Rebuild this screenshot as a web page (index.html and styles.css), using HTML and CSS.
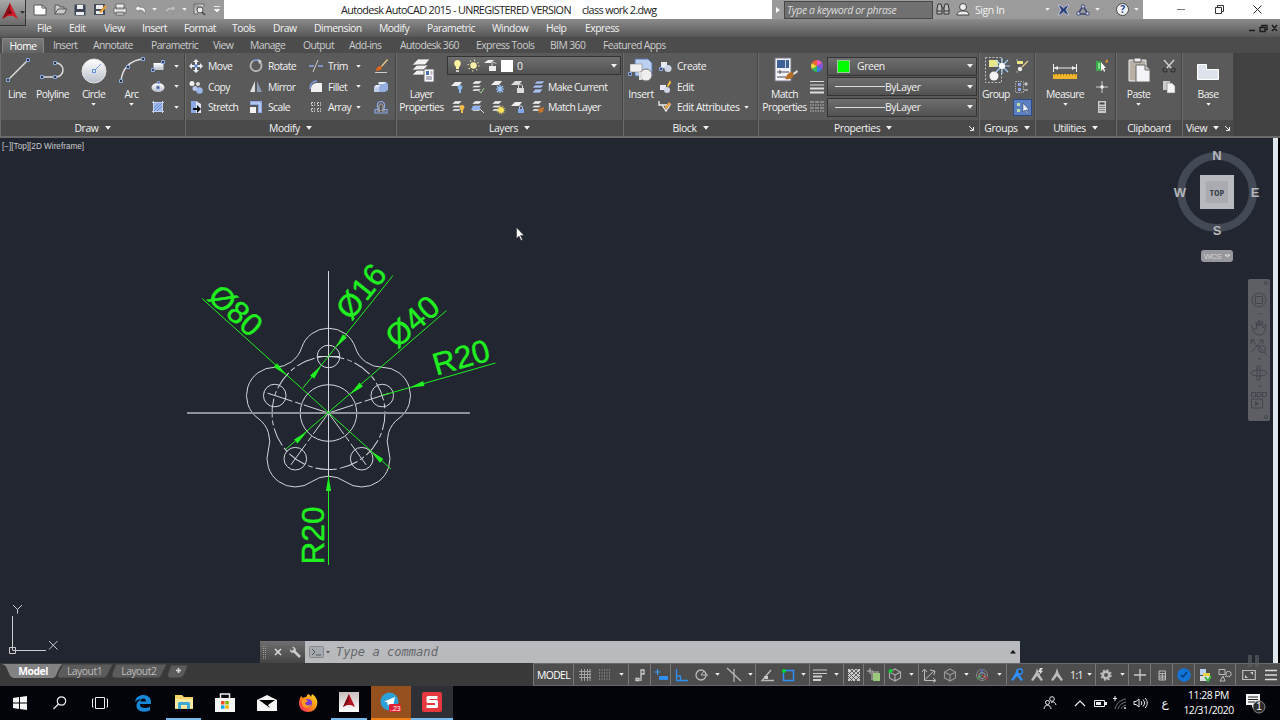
FILE: index.html
```
<!DOCTYPE html>
<html lang="en">
<head>
    <meta charset="UTF-8">
    <title>Autodesk AutoCAD 2015 - class work 2.dwg</title>
    <link rel="stylesheet" href="styles.css">
</head>
<body>
<svg class="defs">
    <defs>
        <linearGradient id="metal" x1="0" y1="0" x2="0" y2="1"><stop offset="0" stop-color="#fff"/><stop offset="1" stop-color="#b9c0cc"/></linearGradient>
        <linearGradient id="rose" x1="0" y1="0" x2="0" y2="1"><stop offset="0" stop-color="#c9bcbc"/><stop offset="1" stop-color="#fff"/></linearGradient>
        <linearGradient id="fox" x1="1" y1="0" x2="0" y2="1"><stop offset="0" stop-color="#ffe226"/><stop offset=".5" stop-color="#ff8a16"/><stop offset="1" stop-color="#f5156c"/></linearGradient>
    </defs>
    <symbol id="down" viewBox="0 0 6 4"><path d="M0 0h6L3 3.800z" fill="#f2f2f2"/></symbol>
    <symbol id="layers" viewBox="0 0 12 12"><path d="M4 1h7L8 4H1zM3 5.500h7l-2 2H1zM3 9h7l-2 2H1z" fill="#eee" stroke="#555" stroke-width=".4"/></symbol>
    <symbol id="person" viewBox="0 0 14 14"><path d="M7 0l1.500 5L13 12l-2 1-4-5-4 5-2-1 4.500-7z"/></symbol>
    <symbol id="cube" viewBox="0 0 14 14"><path d="M7 1l5.500 3v6L7 13 1.500 10V4zM1.500 4L7 7l5.500-3M7 7v6" fill="none" stroke="#aaa" stroke-width="1.200"/></symbol>
</svg>

<header class="titlebar">
    <div class="app-button">
        <svg width="26" height="26" viewBox="0 0 26 26"><path d="M10 3l8 16-5-3H8l-5 3z" fill="#d01f2c"/><path d="M10 3L2 19l6-4 2-6z" fill="#8e0e18"/><path d="M10 9l2 5H8z" fill="#6b0a12"/><path d="M20 11h5l-2.500 3z" fill="#333"/></svg>
    </div>
    <div class="quick">
        <svg width="14" height="12" viewBox="0 0 14 12"><path d="M1 1h8l4 3v7H1z" fill="#fff" stroke="#555"/><path d="M9 1v3h4" fill="none" stroke="#555"/></svg>
        <svg width="14" height="12" viewBox="0 0 14 12"><path d="M1 10V1h4l1 2h4v2M1 10l3-5h9l-3 5z" fill="#ccc" stroke="#555"/></svg>
        <svg width="12" height="12" viewBox="0 0 12 12"><path d="M.5.500h11v11H.5z" fill="#3f4656"/><path d="M3 1h6v4H3zM2 8h8v3H2z" fill="#eee"/></svg>
        <svg width="14" height="14" viewBox="0 0 14 14"><path d="M1 1h11v11H1z" fill="#444b58"/><path d="M3 2h7v4H3zM3 8h7v3H3z" fill="#eee"/><path d="M6 9l6-7 2 2-6 6z" fill="#e49b3d"/></svg>
        <svg width="14" height="12" viewBox="0 0 14 12"><path d="M3 0h8v5H3zM1 4h12v5H1zM3 8h8v3H3z" fill="#eee" stroke="#555" stroke-width=".8"/></svg>
        <svg width="13" height="11" viewBox="0 0 13 11"><path d="M5 1L1 4.500 5 8V6c4 0 5 1 5 4 3-4 1-7-5-7z" fill="#f2f2f2" stroke="#666" stroke-width=".6"/></svg>
        <svg width="5" height="3"><use href="#down"/></svg>
        <svg width="13" height="11" viewBox="0 0 13 11"><path d="M8 1l4 3.500L8 8V6C4 6 3 7 3 10 0 6 2 3 8 3z" fill="#bbb" stroke="#888" stroke-width=".6"/></svg>
        <svg width="5" height="3"><use href="#down"/></svg>
        <svg width="13" height="13" viewBox="0 0 13 13"><path d="M1 1h10v3M1 1v10h4" fill="#ccc" stroke="#666"/><circle cx="7" cy="7" r="3" fill="#eee" stroke="#555"/><path d="M9 9l3 3" stroke="#444" stroke-width="1.500"/></svg>
        <svg width="8" height="8" viewBox="0 0 8 8"><path d="M1 .500h6M1.500 3.500h5L4 6z" fill="#fff" stroke="#fff" stroke-width=".8"/></svg>
    </div>
    <div class="title"><span>Autodesk AutoCAD 2015 - UNREGISTERED VERSION</span><span>class work 2.dwg</span></div>
    <div class="infocenter">
        <svg width="4" height="6"><path d="M0 0l4 3-4 3z" fill="#fff"/></svg>
        <span class="search">Type a keyword or phrase</span>
        <svg width="14" height="13" viewBox="0 0 14 13"><path d="M2 1h3l1 4v6H1V6zM9 1h3l1 5v5H8V5zM6 5h2" fill="#bbb" stroke="#333"/><path d="M1 8h5M8 8h5" stroke="#333"/></svg>
        <svg width="14" height="13" viewBox="0 0 14 13"><circle cx="7" cy="4" r="3.500" fill="#eee" stroke="#444"/><path d="M1 12c0-3 3-4 6-4s6 1 6 4z" fill="#eee" stroke="#444"/></svg>
        <span class="signin">Sign In</span>
        <svg width="5" height="3"><use href="#down"/></svg>
        <svg width="13" height="12" viewBox="0 0 13 12"><path d="M1 1c3 0 4 2 5.500 3C8 3 9 1 12 1L9 6l3 5c-3 0-4-2-5.500-3C5 9 4 11 1 11l3-5z" fill="#2b3f7c" stroke="#d5daea" stroke-width=".7"/></svg>
        <svg width="14" height="12" viewBox="0 0 14 12"><path d="M7 2l5 8H2z" fill="none" stroke="#3a4676" stroke-width="1.500"/><circle cx="7" cy="2.500" r="1.700" fill="#cdd3e5" stroke="#3a4676"/><circle cx="2.500" cy="9.500" r="1.700" fill="#cdd3e5" stroke="#3a4676"/><circle cx="11.500" cy="9.500" r="1.700" fill="#cdd3e5" stroke="#3a4676"/></svg>
        <svg width="5" height="3"><use href="#down"/></svg>
        <span class="help">?</span>
        <svg width="5" height="3"><use href="#down"/></svg>
    </div>
    <div class="window-buttons">
        <svg width="9" height="9"><path d="M0 4.500h8" stroke="#777"/></svg>
        <svg width="9" height="9"><path d="M.5 2.500h6v6h-6zM2.500 2V.500h6v6H7" fill="none" stroke="#333"/></svg>
        <svg width="9" height="9"><path d="M.5.500l8 8M8.500.500l-8 8" stroke="#222"/></svg>
    </div>
</header>

<nav class="menubar">
    <span>File</span><span>Edit</span><span>View</span><span>Insert</span><span>Format</span><span>Tools</span><span>Draw</span><span>Dimension</span><span>Modify</span><span>Parametric</span><span>Window</span><span>Help</span><span>Express</span>
    <svg width="30" height="8" viewBox="0 0 30 8"><path d="M1 6.500h6M12 3.500h5v4h-5zM14 3V1.500h5v4h-2M24 1l5 6M29 1l-5 6" fill="none" stroke="#1c1c1c" stroke-width="1.400"/></svg>
</nav>

<nav class="tabs">
    <span class="active">Home</span><span>Insert</span><span>Annotate</span><span>Parametric</span><span>View</span><span>Manage</span><span>Output</span><span>Add-ins</span><span>Autodesk 360</span><span>Express Tools</span><span>BIM 360</span><span>Featured Apps</span>
    <svg width="21" height="7" viewBox="0 0 21 7"><rect width="12" height="7" rx="2" fill="#eee"/><path d="M4 4.500h4L6 2z" fill="#333"/><path d="M16 2.500h5l-2.500 3z" fill="#eee"/></svg>
</nav>

<section class="ribbon">
    <div class="panel">
        <div class="panel-body draw">
            <div class="big"><svg width="28" height="28" viewBox="0 0 28 28"><path d="M5 24L25 4" stroke="#ddd" stroke-width="1.500"/><path d="M3.500 22.500h3v3h-3zM23.500 2.500h3v3h-3z" fill="#333" stroke="#8aa9e6"/></svg><span>Line</span></div>
            <div class="big"><svg width="28" height="28" viewBox="0 0 28 28"><path d="M3 21h14a7 7 0 0 0 0-14h-1" fill="none" stroke="#ddd" stroke-width="1.500"/><path d="M1.500 19.500h3v3h-3zM14.500 19.500h3v3h-3zM14.500 5.500h3v3h-3z" fill="#333" stroke="#8aa9e6"/></svg><span>Polyline</span></div>
            <div class="big"><svg width="28" height="28" viewBox="0 0 28 28"><circle cx="14" cy="15" r="12" fill="url(#metal)" stroke="#ddd"/><path d="M14 15l7-7" stroke="#7d9fe0"/><path d="M12.500 13.500h3v3h-3z" fill="#dfe6f4" stroke="#5f8add"/></svg><span>Circle</span><svg class="arrow"><use href="#down"/></svg></div>
            <div class="big"><svg width="28" height="28" viewBox="0 0 28 28"><path d="M3 25C4 13 12 4 25 3" fill="none" stroke="#ddd" stroke-width="1.500"/><path d="M1.500 23.500h3v3h-3zM8.500 9.500h3v3h-3zM23.500 1.500h3v3h-3z" fill="#333" stroke="#8aa9e6"/></svg><span>Arc</span><svg class="arrow"><use href="#down"/></svg></div>
            <div class="stack">
                <div><svg class="ic" viewBox="0 0 14 14"><path d="M2.500 4h10v7h-10z" fill="url(#metal)"/><path d="M.5 9.500h3v3h-3zM10.500 1.500h3v3h-3z" fill="#445" stroke="#8aa9e6"/></svg><svg class="arrow"><use href="#down"/></svg></div>
                <div><svg class="ic" viewBox="0 0 14 14"><ellipse cx="7" cy="7.500" rx="6.500" ry="4.500" fill="url(#metal)"/><path d="M5.500 6h3v3h-3zM6.500 1.500h2v2h-2z" fill="#556" stroke="#8aa9e6"/></svg><svg class="arrow"><use href="#down"/></svg></div>
                <div><svg class="ic" viewBox="0 0 14 14"><path d="M3 3h8v8H3z" fill="#9db6ea"/><path d="M1 2.500h12M1 11.500h12M2.500 1v12M11.500 1v12" stroke="#c5d2ef"/><path d="M3 8l5-5M3 11l8-8M6 11l5-5" stroke="#6d8fd4"/></svg><svg class="arrow"><use href="#down"/></svg></div>
            </div>
        </div>
        <div class="panel-title">Draw<svg><use href="#down"/></svg></div>
    </div>

    <div class="panel">
        <div class="panel-body modify">
            <div class="stack">
                <div><svg class="ic" viewBox="0 0 14 14"><path d="M7 0l3 3H8v3h3V4l3 3-3 3V8H8v3h2l-3 3-3-3h2V8H3v2L0 7l3-3v2h3V3H4z" fill="#e8ecf5"/><path d="M5.500 5.500h3v3h-3z" fill="#557dcc"/></svg><span>Move</span></div>
                <div><svg class="ic" viewBox="0 0 14 14"><circle cx="3" cy="3.500" r="2.500" fill="#eee"/><circle cx="9" cy="4" r="2" fill="#ddd"/><circle cx="6" cy="8.500" r="2.500" fill="#b9c8ea"/><circle cx="10.500" cy="10.500" r="3.200" fill="#9cb6ea"/></svg><span>Copy</span></div>
                <div><svg class="ic" viewBox="0 0 14 14"><path d="M2 1h5l5 3v9H2z" fill="#dfe6f3"/><path d="M2 1h5v12H2z" fill="#8aa9e6"/><path d="M4 8h4V5l4 4-4 4v-3H4z" fill="#111"/></svg><span>Stretch</span></div>
            </div>
            <div class="stack">
                <div><svg class="ic" viewBox="0 0 14 14"><path d="M10 2A5.500 5.500 0 1 1 4 2" fill="none" stroke="#bbb" stroke-width="1.700"/><path d="M4 2a5.500 5.500 0 0 1 6 0" fill="none" stroke="#7fa2e4" stroke-width="1.500"/><path d="M9 0l4 2-3 3z" fill="#ccc"/></svg><span>Rotate</span></div>
                <div><svg class="ic" viewBox="0 0 14 14"><path d="M6 1v11H1z" fill="#ddd"/><path d="M8 1v11h5z" fill="#8a99b5"/></svg><span>Mirror</span></div>
                <div><svg class="ic" viewBox="0 0 14 14"><path d="M1 1h12v12H9V5H1z" fill="#8aa9e6"/><path d="M1 7h6v6H1z" fill="#f2f2f2"/><path d="M2 3h9v9" stroke="#dce5f8" fill="none"/></svg><span>Scale</span></div>
            </div>
            <div class="stack">
                <div><svg class="ic" viewBox="0 0 14 14"><path d="M0 7h5M9 7h5" stroke="#8aa9e6" stroke-width="1.500"/><path d="M4 13L9 1" stroke="#ccc"/></svg><span>Trim</span></div>
                <div><svg class="ic" viewBox="0 0 14 14"><path d="M2 12V9c0-4 3-6 6-6h5v9z" fill="#f0f0f0"/><path d="M1 9c0-5 3-8 7-8" fill="none" stroke="#7fa2e4" stroke-width="1.500"/></svg><span>Fillet</span></div>
                <div><svg class="ic" viewBox="0 0 14 14"><path d="M2.500 2.500h3v3h-3zM8.500 2.500h3v3h-3zM2.500 8.500h3v3h-3zM8.500 8.500h3v3h-3z" fill="none" stroke="#ddd" stroke-dasharray="1.500 1"/></svg><span>Array</span></div>
            </div>
            <div class="stack">
                <div><svg class="arrow"><use href="#down"/></svg></div>
                <div><svg class="arrow"><use href="#down"/></svg></div>
                <div><svg class="arrow"><use href="#down"/></svg></div>
            </div>
            <div class="stack">
                <div><svg class="ic" viewBox="0 0 14 14"><path d="M7 7l6-7 1 1-6 7z" fill="#eac68b"/><path d="M2 12c0-3 2-5 5-5l1 2c-1 2-3 3-6 3z" fill="#d9681e"/><path d="M1 13.500h12" stroke="#ccc"/></svg></div>
                <div><svg class="ic" viewBox="0 0 14 14"><path d="M5 2h7l2 2v6l-3 2H5z" fill="#93aedf"/><path d="M5 2h7l-2 2H4zM0 7l2-2h4l-1 2z" fill="#e7edf9"/><path d="M0 7h5v5H0z" fill="#c1cfeb"/></svg></div>
                <div><svg class="ic" viewBox="0 0 14 14"><path d="M1 13V9.500h3.500C2 6 3.500 1.500 7 1.500s5 4.500 2.500 8H13V13z" fill="none" stroke="#8aa9e6" stroke-width="1.200"/><path d="M3 11h3C4 7 5 4 7 4s3 3 1 7h3" fill="none" stroke="#bbb"/></svg></div>
            </div>
        </div>
        <div class="panel-title">Modify<svg><use href="#down"/></svg></div>
    </div>

    <div class="panel">
        <div class="panel-body layers">
            <div class="big"><svg width="28" height="28" viewBox="0 0 28 28"><path d="M10 3h12l-5 6H4zM9 9h11l-4 5H4zM9 14h11l-4 5H4z" fill="#f1f1f1" stroke="#555" stroke-width=".7"/><path d="M16 13h10v13H16z" fill="#fff" stroke="#667"/><path d="M18 15h3v4h-3z" fill="#4c70b8"/><path d="M22.500 16h2M22.500 18h2M18 21h6M18 23h6" stroke="#668"/></svg><span>Layer<br>Properties</span></div>
            <div>
                <div class="combo">
                    <svg width="11" height="14" viewBox="0 0 11 14"><path d="M5.500 1C2 1 1 5 4 8v2h3V8c3-2 2-7-1.500-7z" fill="#fdf3a3"/><path d="M4 11h3v2H4z" fill="#ccc"/></svg>
                    <svg width="13" height="13" viewBox="0 0 13 13"><circle cx="6.500" cy="6.500" r="3.200" fill="#fbf1a6"/><circle cx="6.500" cy="6.500" r="5.300" fill="none" stroke="#f0e9b0" stroke-width="1.500" stroke-dasharray="1 3.160"/></svg>
                    <svg width="13" height="13" viewBox="0 0 13 13"><path d="M4 1h6L7 4H0zM5 7h7v5H5z" fill="#eee"/><path d="M8 7V5c0-2 4-2 4 0" fill="none" stroke="#ddd"/></svg>
                    <i class="swatch white"></i><span>0</span><svg class="arrow"><use href="#down"/></svg>
                </div>
                <div class="icon-row">
                    <svg class="ic" viewBox="0 0 14 14"><path d="M4 2h7L8 6H0z" fill="#eee"/><path d="M9 5c-3 0-3 3-1 5v3h2v-3c2-2 2-5-1-5z" fill="#86b7f0"/></svg>
                    <svg class="ic" viewBox="0 0 14 14"><use href="#layers" width="12" height="12"/><path d="M8 11l2 2 3-5" fill="none" stroke="#9bd08c"/></svg>
                    <svg class="ic" viewBox="0 0 14 14"><path d="M4 1h7L8 5H0z" fill="#eee"/><path d="M9 5v8M5 9h8M6 6l6 6M12 6l-6 6" stroke="#9cc6ff" stroke-width="1.200"/></svg>
                    <svg class="ic" viewBox="0 0 14 14"><path d="M4 1h7L8 5H0zM6 8h7v5H6z" fill="#ddd"/><path d="M7.500 8V6c0-2 4-2 4 0v2" fill="none" stroke="#ddd"/></svg>
                    <svg class="ic" viewBox="0 0 14 14"><path d="M6 1h8l-3 3H3zM4 5h9l-3 3H1zM4 9h8l-3 4H1z" fill="#a9c0ec" stroke="#445" stroke-width=".6"/></svg>
                    <span>Make Current</span>
                </div>
                <div class="icon-row">
                    <svg class="ic" viewBox="0 0 14 14"><use href="#layers" width="12" height="12"/><path d="M11 5c-3 0-3 3-1 5v3h2v-3c2-2 2-5-1-5z" fill="#f5bd4a"/></svg>
                    <svg class="ic" viewBox="0 0 14 14"><use href="#layers" width="12" height="12"/><path d="M2 6h8l-2 4H0z" fill="#8fb0ea"/><path d="M9 9l4 4" stroke="#ddd"/></svg>
                    <svg class="ic" viewBox="0 0 14 14"><use href="#layers" width="12" height="12"/><circle cx="10" cy="10" r="3" fill="#ffe35b"/><circle cx="10" cy="10" r="4" fill="none" stroke="#ffe97e" stroke-dasharray="1 1.500"/></svg>
                    <svg class="ic" viewBox="0 0 14 14"><path d="M4 2h7L8 6H0z" fill="#eee"/><path d="M7 9h6v4H7z" fill="#7fa7ea"/><path d="M8.500 9V7c0-1.500 3-1.500 3 0v2" fill="none" stroke="#b5caee"/></svg>
                    <svg class="ic" viewBox="0 0 14 14"><use href="#layers" width="12" height="12"/><path d="M7 9l6-2-1 5-4 1z" fill="#c7752c"/></svg>
                    <span>Match Layer</span>
                </div>
            </div>
        </div>
        <div class="panel-title">Layers<svg><use href="#down"/></svg></div>
    </div>

    <div class="panel">
        <div class="panel-body block">
            <div class="big"><svg width="28" height="28" viewBox="0 0 28 28"><path d="M8 3h13l4 4v13H8z" fill="#bcd0f2" stroke="#5577ad"/><path d="M3 8h12v8H3z" fill="#f1f1f1" stroke="#777" stroke-width=".5"/><circle cx="19" cy="19" r="6" fill="#eee" stroke="#777"/><path d="M1.500 16.500h3v3h-3z" fill="#445" stroke="#8aa9e6"/><path d="M12 16h3v8h-3z" fill="#ddd"/></svg><span>Insert</span></div>
            <div class="stack">
                <div><svg class="ic" viewBox="0 0 14 14"><path d="M3 3h6v6H3z" fill="#e5eaf5"/><circle cx="10" cy="9.500" r="3.500" fill="#cdd5e6"/><path d="M1.500 8.500h3v3h-3z" fill="#456" stroke="#8aa9e6"/></svg><span>Create</span></div>
                <div><svg class="ic" viewBox="0 0 14 14"><path d="M2 5h6v5H2z" fill="#e5eaf5"/><circle cx="9" cy="10" r="3" fill="#cdd5e6"/><path d="M9 6l3-6 1 3-3 4z" fill="#ffc13b"/></svg><span>Edit</span></div>
                <div><svg class="ic" viewBox="0 0 14 14"><path d="M1 1v4h3M4 5h8l-4 6z" fill="none" stroke="#eee" stroke-width="1.300"/><path d="M6 8l5-6 2 2-5 5z" fill="#eaa04f"/></svg><span>Edit Attributes</span><svg class="arrow"><use href="#down"/></svg></div>
            </div>
        </div>
        <div class="panel-title">Block<svg><use href="#down"/></svg></div>
    </div>

    <div class="panel">
        <div class="panel-body properties">
            <div class="big"><svg width="28" height="28" viewBox="0 0 28 28"><path d="M4 2h16v23H4z" fill="#f3f4f8" stroke="#778"/><path d="M6 4h12v8H6z" fill="#3e6198"/><path d="M14.500 4v8" stroke="#c9d3e6"/><path d="M6 16h12M9 14v4M6 21h9" stroke="#445"/><path d="M14 23c2-5 4-7 7-7l2 3c-2 4-5 5-9 4z" fill="#b66e2b"/><path d="M22 17l4-3 1 2-4 3z" fill="#ddd"/></svg><span>Match<br>Properties</span></div>
            <div class="stack">
                <div><svg class="ic" viewBox="0 0 14 14"><path d="M7 7V1a6 6 0 0 1 5.200 3z" fill="#e85ac0"/><path d="M7 7l5.200-3a6 6 0 0 1 0 6z" fill="#8854d8"/><path d="M7 7l5.200 3A6 6 0 0 1 7 13z" fill="#3f77e0"/><path d="M7 7v6a6 6 0 0 1-5.200-3z" fill="#35b95b"/><path d="M7 7l-5.200 3a6 6 0 0 1 0-6z" fill="#f4db3d"/><path d="M7 7L1.800 4A6 6 0 0 1 7 1z" fill="#ee6236"/></svg></div>
                <div><svg class="ic" viewBox="0 0 14 14"><path d="M0 1.500h14M0 5h14" stroke="#ddd" stroke-width="1.200"/><path d="M0 8.500h14M0 12.500h14" stroke="#ddd" stroke-width="2.200"/></svg></div>
                <div><svg class="ic" viewBox="0 0 14 14"><path d="M0 2h14M0 8h14" stroke="#bbb" stroke-dasharray="4 1"/><path d="M0 5h14M0 11h14" stroke="#bbb" stroke-dasharray="1.500 1"/></svg></div>
            </div>
            <div class="combos">
                <div class="combo"><i class="swatch green"></i><span>Green</span><svg class="arrow"><use href="#down"/></svg></div>
                <div class="combo"><i class="rule"></i><span>ByLayer</span><svg class="arrow"><use href="#down"/></svg></div>
                <div class="combo"><i class="rule"></i><span>ByLayer</span><svg class="arrow"><use href="#down"/></svg></div>
            </div>
        </div>
        <div class="panel-title wide">Properties<svg><use href="#down"/></svg><svg class="launch" viewBox="0 0 5 5"><path d="M0 0l4 4M4.500 1v3.500H1" fill="none" stroke="#eee"/></svg></div>
    </div>

    <div class="panel">
        <div class="panel-body groups">
            <div class="big"><svg width="28" height="28" viewBox="0 0 28 28"><path d="M3.500 1.500h16v25h-16z" fill="none" stroke="#bbb" stroke-dasharray="2 1.500"/><path d="M7 4h9v7H7z" fill="#e9e78a"/><circle cx="12" cy="20" r="4.500" fill="#f3f3f3"/><path d="M20 2v16M12 10h16M14 4l12 12M26 4L14 16" stroke="#a8d1ff" stroke-width="1.200"/><circle cx="20" cy="10" r="3" fill="#fff"/></svg><span>Group</span></div>
            <div class="stack">
                <div><svg class="ic" viewBox="0 0 14 14"><path d="M2 2h6v3H2z" fill="#e9e78a"/><circle cx="5" cy="10" r="2.200" fill="#eee"/><path d="M7 8l6-6" stroke="#e0c68a" stroke-width="1.500"/><path d="M1 1h2M1 13h2" stroke="#aaa"/></svg></div>
                <div><svg class="ic" viewBox="0 0 14 14"><path d="M.5 1.500h8v11h-8z" fill="none" stroke="#aaa" stroke-dasharray="1.500 1"/><path d="M3 3h3v3H3zM3 8h3v3H3z" fill="#8aa9e6"/><path d="M9 4h4M11 2v4M9 10h4" stroke="#ddd"/></svg></div>
                <div class="pressed"><svg class="ic" viewBox="0 0 14 14"><path d="M1 2h3v3H1zM1 8h3v3H1z" fill="#b7e0a2"/><path d="M7 2v9l2-2 2 4 1-1-2-3h3z" fill="#eef" stroke="#345" stroke-width=".5"/></svg></div>
            </div>
        </div>
        <div class="panel-title">Groups<svg><use href="#down"/></svg></div>
    </div>

    <div class="panel">
        <div class="panel-body utilities">
            <div class="big"><svg width="28" height="28" viewBox="0 0 28 28"><path d="M2.500 8v8M25.500 8v8M3 12h22" stroke="#eee"/><path d="M3 12l4-2v4zM25 12l-4-2v4z" fill="#eee"/><path d="M2 18h24v5H2z" fill="#f0b52b"/><path d="M3 18.500h22" stroke="#8c6a1b" stroke-width="1.500" stroke-dasharray="1 2"/></svg><span>Measure</span><svg class="arrow"><use href="#down"/></svg></div>
            <div class="stack">
                <div><svg class="ic" viewBox="0 0 14 14"><path d="M1 2h5v10H1z" fill="#39a84d"/><path d="M3 4h2v6H3z" fill="#7fe08e"/><path d="M6 3v9l2-2 1 3 1-1-1-3h2z" fill="#fff"/><path d="M10 4l2-4 1 3z" fill="#ff9d2c"/></svg></div>
                <div><svg class="ic" viewBox="0 0 14 14"><path d="M7 1v12M1 7h12" stroke="#ccc"/><circle cx="7" cy="7" r="1.800" fill="#eee"/></svg></div>
                <div><svg class="ic" viewBox="0 0 14 14"><path d="M3 1h8v12H3z" fill="#ccc"/><path d="M4.500 2.500h5v2h-5zM4.500 6h1v1h-1zM6.500 6h1v1h-1zM8.500 6h1v1h-1zM4.500 8h1v1h-1zM6.500 8h1v1h-1zM8.500 8h1v1h-1zM4.500 10h1v1h-1zM6.500 10h1v1h-1zM8.500 10h1v1h-1z" fill="#444"/></svg></div>
            </div>
        </div>
        <div class="panel-title">Utilities<svg><use href="#down"/></svg></div>
    </div>

    <div class="panel">
        <div class="panel-body clipboard">
            <div class="big"><svg width="28" height="28" viewBox="0 0 28 28"><path d="M4 4h17v21H4z" fill="#b9b1a6" stroke="#eee"/><path d="M9 2h7v4H9z" fill="#eee" stroke="#555"/><path d="M11 9h9l5 5v12H11z" fill="#f3f4f8" stroke="#666"/><path d="M20 9v5h5" fill="#ccc" stroke="#666"/></svg><span>Paste</span><svg class="arrow"><use href="#down"/></svg></div>
            <div class="stack">
                <div><svg class="ic" viewBox="0 0 14 14"><path d="M2 1l8 9M12 1L4 10" stroke="#ccc" stroke-width="1.500"/><circle cx="3" cy="11" r="2" fill="none" stroke="#333" stroke-width="1.200"/><circle cx="11" cy="11" r="2" fill="none" stroke="#333" stroke-width="1.200"/></svg></div>
                <div><svg class="ic" viewBox="0 0 14 14"><path d="M1 1h7v9H1z" fill="#ccc"/><path d="M5 3h5l3 3v7H5z" fill="#f5f5f5" stroke="#777" stroke-width=".6"/></svg></div>
            </div>
        </div>
        <div class="panel-title">Clipboard</div>
    </div>

    <div class="panel">
        <div class="panel-body view">
            <div class="big"><svg width="28" height="28" viewBox="0 0 28 28"><path d="M3.500 8.500h9v5h12v10h-21z" fill="#dfe3ec" stroke="#fff"/></svg><span>Base</span><svg class="arrow"><use href="#down"/></svg></div>
        </div>
        <div class="panel-title">View<svg><use href="#down"/></svg><svg class="launch" viewBox="0 0 5 5"><path d="M0 0l4 4M4.500 1v3.500H1" fill="none" stroke="#eee"/></svg></div>
    </div>
</section>

<main class="canvas">
    <p class="viewport-label">[−][Top][2D Wireframe]</p>

    <!-- model space: flange with its dimensions, one unit per pixel -->
    <svg class="model" viewBox="0 138 1273 525">
        <g class="geometry" transform="translate(328.500 413)">
            <path d="M-26.890-65.260A28.280 28.280 0 0 1 26.890-65.260A28.280 28.280 0 0 0 53.760-45.740A28.280 28.280 0 0 1 70.370 5.400A28.280 28.280 0 0 0 60.110 36.990A28.280 28.280 0 0 1 16.610 68.600A28.280 28.280 0 0 0-16.610 68.600A28.280 28.280 0 0 1-60.110 36.990A28.280 28.280 0 0 0-70.370 5.400A28.280 28.280 0 0 1-53.760-45.740A28.280 28.280 0 0 0-26.890-65.260z"/>
            <circle r="28.300"/>
            <circle r="56.500" stroke-dasharray="19 3 5 3" transform="rotate(84)"/>
            <circle cy="-56.500" r="11.300"/>
            <circle cx="53.740" cy="-17.460" r="11.300"/>
            <circle cx="-53.740" cy="-17.460" r="11.300"/>
            <circle cx="33.200" cy="45.700" r="11.300"/>
            <circle cx="-33.200" cy="45.700" r="11.300"/>
            <path d="M0-142V63M-11-56.500H11"/>
            <path stroke-dasharray="26 3 6 3" d="M0 0L64.500-21M0 0L-64.500-21M0 0L39.800 54.800M0 0L-39.800 54.800"/>
            <path class="axis" d="M-141.500 0H141.500"/>
        </g>
        <g class="dims">
            <path d="M202 298.500L391 469M393 275.500L303 388M446.500 310.500L286 449M495.500 363L382 395.500M328.500 565V476"/>
            <path class="tip" transform="translate(286.500 375.200) rotate(42)" d="M0 0l-15-2.600v5.200z"/>
            <path class="tip" transform="translate(370.500 450.800) rotate(42)" d="M0 0l15-2.600v5.200z"/>
            <path class="tip" transform="translate(335.500 347.700) rotate(-51.500)" d="M0 0l15-2.600v5.200z"/>
            <path class="tip" transform="translate(321.500 365.300) rotate(-51.500)" d="M0 0l-15-2.600v5.200z"/>
            <path class="tip" transform="translate(349.900 394.400) rotate(-41)" d="M0 0l15-2.600v5.200z"/>
            <path class="tip" transform="translate(307.100 431.600) rotate(-41)" d="M0 0l-15-2.600v5.200z"/>
            <path class="tip" transform="translate(409.400 387.700) rotate(-16)" d="M0 0l15-2.600v5.200z"/>
            <path class="tip" transform="translate(328.500 476)" d="M0 0l-2.600 15h5.200z"/>
            <text transform="translate(236 310) rotate(42)" y="11.300">Ø80</text>
            <text transform="translate(360.800 291) rotate(-51.500)" y="11.300">Ø16</text>
            <text transform="translate(412 321) rotate(-41)" y="11.300">Ø40</text>
            <text transform="translate(461 357) rotate(-16)" y="11.300">R20</text>
            <text transform="translate(312.500 535.500) rotate(-90)" y="11.300">R20</text>
        </g>
        <path class="ucs" d="M12.500 616v34M12.500 650.500H46M9.500 647.500h6v6h-6zM13 605l4.500 4.500L22 605M17.500 609.500v4M49 641l8.500 8.500M57.500 641L49 649.500"/>
        <path class="pointer" d="M516.500 227.500v11l2.500-2.500 2 4.500 1.500-.700-2-4.300h3.500z"/>
    </svg>

    <div class="viewcube">
        <svg width="90" height="90" viewBox="0 0 90 90">
            <circle cx="45" cy="45" r="36" fill="none" stroke="#434a55" stroke-width="8"/>
            <path d="M28 28h34v34H28z" fill="#b9babd"/><path d="M34 34h22v22H34z" fill="#a9abb0"/>
            <g class="compass"><text x="45" y="12.500">N</text><text x="45" y="87.500">S</text><text x="8" y="50">W</text><text x="83" y="50">E</text></g>
            <text class="face" x="45" y="48.500">TOP</text>
        </svg>
    </div>
    <div class="wcs">WCS <svg width="6" height="4"><path d="M0 1h5L2.500 3z" fill="none" stroke="#ddd"/></svg></div>
    <svg class="navbar" viewBox="0 0 22 142">
        <rect width="22" height="142" rx="2" fill="#5d5f64"/>
        <g fill="none" stroke="#41454c"><circle cx="18" cy="4" r="1.500"/><circle cx="18" cy="138" r="1.500"/><circle cx="11" cy="21" r="7"/><path d="M7.500 17.500h7v7h-7zM10 34l1.500 1.500L13 34M10 80h3M10 107h3"/><path d="M5 50l-2-4M5 50c1 5 4 6 7 6 4 0 5-4 6-11l-3 4-1-7-2 5-1-6-1 6-2-4 1 7zM3 61l12 11M15 61L3 73M3 65v-4h4M15 65v-4h-4"/><circle cx="14" cy="70" r="3.500"/><path d="M16 73l3 3M9 87h3v14H9z"/><ellipse cx="11" cy="94" rx="8" ry="3"/><path d="M3.500 113.500h4v4h-4zM9 113.500h4v4H9zM14.500 113.500h4v4h-4zM3.500 120h11v9h-11z"/></g><path d="M7 122l4 2.500-4 2.500z" fill="#41454c"/>
    </svg>
    <div class="command">
        <div class="command-tools">
            <svg width="5" height="15"><path d="M1.500 1v14M3.500 1v14" stroke="#999" stroke-dasharray="1 1"/></svg>
            <svg width="8" height="8"><path d="M1 1l6 6M7 1L1 7" stroke="#ddd" stroke-width="1.500"/></svg>
            <svg width="12" height="12" viewBox="0 0 12 12"><path d="M5 5l6 6" stroke="#ccc" stroke-width="2.500"/><path d="M1 3l2 2 2-2-2-2a3 3 0 1 1-2 2z" fill="#ccc"/></svg>
        </div>
        <div class="command-line">
            <svg width="22" height="12" viewBox="0 0 22 12"><rect x=".5" y=".5" width="14" height="11" rx="1" fill="#a5a9b0" stroke="#888"/><path d="M3 3l3 3-3 3M7 9h5" fill="none" stroke="#555"/><path d="M17 5h4l-2 2.500z" fill="#555"/></svg>
            <span>Type a command</span>
            <svg width="6" height="4"><path d="M0 3.500h6L3 0z" fill="#111"/></svg>
        </div>
    </div>
</main>

<div class="bottombar">
    <div class="layouts">
        <svg width="200" height="24" viewBox="0 0 200 24">
            <path d="M0 1c5 0 6 2 8 7s3 7 7 7h37c4 0 4-3 6-7s3-7 6-7z" fill="#828282"/>
            <path d="M63 1l-5 9c-1 4 0 5 4 5h41c4 0 5-4 7-8l3-6zM116 1l-3 7c-2 5-1 7 3 7h41c4 0 5-4 7-8l3-6zM171 2l-3 8c-1 3 0 5 3 5h9c4 0 6-8 8-13z" fill="#5b5b5b" stroke="#3c3c3c"/>
            <text class="on" x="33" y="12">Model</text><text x="84.500" y="12">Layout1</text><text x="138.800" y="12">Layout2</text><path d="M176 7.500h5M178.500 5v5" stroke="#ddd" stroke-width="1.500"/>
        </svg>
    </div>
    <div class="status">
        <span class="model-btn sep">MODEL</span>
        <svg class="ic" viewBox="0 0 14 14"><path d="M3.500 1v12M6.500 1v12M9.500 1v12M12 1v12M1 3.500h12M1 6.500h12M1 9.500h12" stroke="#aaa" stroke-width=".9"/></svg>
        <svg class="ic" viewBox="0 0 14 14"><path d="M1 2h12M1 5h12M1 8h12M1 11h12" stroke="#aaa" stroke-dasharray="1 1.500"/></svg>
        <span class="sep"><svg class="arrow"><use href="#down"/></svg></span>
        <span class="sep"><svg class="ic" viewBox="0 0 14 14"><path d="M3 10.500h3v2H3zM8 13V2h3v4H8" fill="none" stroke="#ccc" stroke-width="1.300"/></svg></span>
        <span class="sep"><svg class="ic" viewBox="0 0 14 14"><path d="M3.500 1v6M.5 4h6" stroke="#3ea0ff"/><rect x="5" y="8" width="9" height="4" rx="1" fill="#2f8ff5"/></svg></span>
        <svg class="ic" viewBox="0 0 14 14"><path d="M2.500 1v11.500H14M2.500 8h4v4" fill="none" stroke="#2f8ff5" stroke-width="1.300"/></svg>
        <svg class="ic" viewBox="0 0 14 14"><circle cx="7" cy="7" r="5" fill="none" stroke="#bbb" stroke-width="1.300"/><path d="M7 7h7M7 7l3-4" stroke="#bbb"/></svg>
        <svg class="arrow"><use href="#down"/></svg>
        <svg class="ic" viewBox="0 0 14 14"><path d="M0 0l14 13M7 1v13" stroke="#bbb" stroke-width="1.200"/></svg>
        <span class="sep"><svg class="arrow"><use href="#down"/></svg></span>
        <svg class="ic" viewBox="0 0 14 14"><path d="M11 2L2 12.500h12" fill="none" stroke="#bbb" stroke-width="1.300"/><path d="M4 8h4v3H5z" fill="#ccc"/></svg>
        <svg class="ic" viewBox="0 0 14 14"><path d="M2.500 2.500h10v10h-10z" fill="none" stroke="#2f8ff5" stroke-width="1.500"/><circle cx="3" cy="3" r="2" fill="#00d12b"/></svg>
        <span class="sep"><svg class="arrow"><use href="#down"/></svg></span>
        <svg class="ic" viewBox="0 0 14 14"><path d="M0 2h14M0 5.500h14" stroke="#ccc"/><path d="M0 8.500h9M0 12h8" stroke="#ccc" stroke-width="2"/></svg>
        <span class="sep"><svg class="arrow"><use href="#down"/></svg></span>
        <span class="sep"><svg class="ic" viewBox="0 0 14 14"><path d="M1 1h12v12H1z" fill="#ccc"/><path d="M1 4l9 9M1 8l5 5M3 1l10 10M7 1l6 6M13 3L3 13M13 8l-5 5M11 1L1 11M7 1L1 7" stroke="#555" stroke-width=".9"/></svg></span>
        <span class="sep"><svg class="ic" viewBox="0 0 14 14"><path d="M6 5h7v8H6z" fill="#9ac97d"/><path d="M5 12V4h7M3 0v6M0 3h6" fill="none" stroke="#bbb"/></svg></span>
        <svg class="ic" viewBox="0 0 14 14"><use href="#cube"/><circle cx="2.500" cy="3" r="2" fill="#00d12b"/></svg>
        <span class="sep"><svg class="arrow"><use href="#down"/></svg></span>
        <svg class="ic" viewBox="0 0 14 14"><path d="M2.500 2v10.500H13M2.500 12L12 3M0 4l2.500-3L5 4M11 10l3 2.500-3 2M8 2l5 1-1 4" fill="none" stroke="#bbb"/></svg>
        <svg class="ic dim"><use href="#cube"/></svg>
        <svg class="arrow"><use href="#down"/></svg>
        <svg class="ic" viewBox="0 0 14 14"><circle cx="7" cy="7" r="5.500" fill="none" stroke="#888"/><path d="M7 7V1" stroke="#4c6cc9" stroke-width="1.500"/><path d="M7 7l-5 4" stroke="#3ba34b" stroke-width="1.500"/><path d="M7 7l6 4" stroke="#b33" stroke-width="1.500"/><path d="M7 4l3 2v3l-3 2-3-2V6z" fill="none" stroke="#999"/></svg>
        <span class="sep"><svg class="arrow"><use href="#down"/></svg></span>
        <svg class="ic blue" viewBox="0 0 14 14"><use href="#person"/><circle cx="10" cy="3.500" r="2.500" fill="#3f3f3f" stroke="#2f8ff5" stroke-width="1.300"/></svg>
        <svg class="ic grey" viewBox="0 0 14 14"><use href="#person"/><path d="M10 0l-2 4h2L9 7l4-4h-2l2-3z" fill="#ddd"/></svg>
        <svg class="ic grey" viewBox="0 0 14 14"><use href="#person"/></svg>
        <span class="sep scale">1:1<svg class="arrow"><use href="#down"/></svg></span>
        <svg class="ic" viewBox="0 0 14 14"><circle cx="7" cy="7" r="3.200" fill="none" stroke="#bbb" stroke-width="2.600"/><circle cx="7" cy="7" r="5" fill="none" stroke="#bbb" stroke-width="1.500" stroke-dasharray="2 1.930"/></svg>
        <span class="sep"><svg class="arrow"><use href="#down"/></svg></span>
        <span class="sep"><svg class="ic" viewBox="0 0 14 14"><path d="M7 1v12M1 7h12" stroke="#ccc" stroke-width="1.300"/></svg></span>
        <span class="sep"><svg class="ic" viewBox="0 0 14 14"><path d="M4 3h6.500v9H4zM4 5.500h6.500M7.300 5v7M4 8h6.500M4 10h6.500" fill="none" stroke="#bbb"/></svg></span>
        <span class="sep"><svg class="ic" viewBox="0 0 14 14"><circle cx="7" cy="7" r="6.700" fill="#1274d6"/><path d="M4 7l2 2 4-5" fill="none" stroke="#073a74" stroke-width="1.500"/></svg></span>
        <svg class="ic" viewBox="0 0 14 14"><path d="M2 1h6v6H2z" fill="#bcd0f2"/><path d="M5 5h7v5H5z" fill="#e9d34c"/><path d="M2 8h9v5H2z" fill="#ddd"/><path d="M7 9l3 4 3-5" stroke="#3bb54a" stroke-width="2" fill="none"/></svg>
        <span class="sep"><svg class="ic" viewBox="0 0 14 14"><path d="M1 1.500h6v5H1zM7 13H2l3-5zM7 8.500h1" fill="none" stroke="#bbb"/><circle cx="10.500" cy="6" r="2.700" fill="none" stroke="#bbb"/></svg></span>
        <svg class="ic" viewBox="0 0 14 14"><path d="M.700 2.500h12.600v9H.700z" fill="none" stroke="#bbb" stroke-width="1.200"/><path d="M3 10V7l3 3zM11 4v3L8 4z" fill="#ccc"/></svg>
        <svg class="ic" viewBox="0 0 14 14"><path d="M1 2.500h12M1 7h12M1 11.500h12" stroke="#ddd" stroke-width="1.500"/></svg>
        <svg class="pause" width="14" height="12"><path d="M1 0h4v12H1zM8 0h4v12H8z" fill="#5b5d61"/></svg>
    </div>
</div>

<footer class="taskbar">
    <span><svg width="16" height="16" viewBox="0 0 16 16"><path d="M1 3l6-1v5.500H1zM8 2l7-1v6.500H8zM1 8.500h6V14l-6-1zM8 8.500h7V15l-7-1z" fill="#f5f5f5"/></svg></span>
    <span><svg width="16" height="16" viewBox="0 0 16 16"><circle cx="9.500" cy="6" r="4.200" fill="none" stroke="#eee" stroke-width="1.200"/><path d="M6.500 9L1.500 14" stroke="#eee" stroke-width="1.200"/></svg></span>
    <span><svg width="16" height="16" viewBox="0 0 16 16"><path d="M3.500 2.500h9v11h-9zM1.500 4H.5v8h1M14.500 4h1v8h-1" fill="none" stroke="#eee"/></svg></span>
    <span><svg width="18" height="18" viewBox="0 0 18 18"><path d="M1 8C2 3 5 1 9.500 1 14 1 17 4 17 8v2H6c0 3 2 4 5 4 2 0 3.500-.500 5-1.300v3.500c-2 1-4 1.500-6 1.500-5 0-8-3-7.500-7C3 8 5 6 8 5 5 5 3 6 1 8zM6.500 7.500H12c0-4-5-4-5.500 0z" fill="#1788d8"/></svg></span>
    <span class="open"><svg width="20" height="18" viewBox="0 0 20 18"><path d="M1 2h7l2 2h9v12H1z" fill="#f5d469"/><path d="M1 6h18v9H1z" fill="#fce9a0"/><path d="M4 16v-5c0-2 1-2 2-2h8c1 0 2 0 2 2v5h-3v-4H7v4z" fill="#3da9d8"/></svg></span>
    <span><svg width="20" height="20" viewBox="0 0 20 20"><path d="M0 5h20v14H0z" fill="#f5f5f5"/><path d="M5.500 6V1h9v5" fill="none" stroke="#eee" stroke-width="1.500"/><path d="M6 8h3.500v3.500H6z" fill="#f25022"/><path d="M10.300 8h3.500v3.500h-3.500z" fill="#7fba00"/><path d="M6 12.300h3.500v3.500H6z" fill="#00a4ef"/><path d="M10.300 12.300h3.500v3.500h-3.500z" fill="#ffb900"/></svg></span>
    <span><svg width="20" height="16" viewBox="0 0 20 16"><path d="M0 5l10-5 10 5v11H0z" fill="#f5f5f5"/><path d="M2 5h16l-7 5 2 3z" fill="#000"/></svg></span>
    <span><svg width="20" height="20" viewBox="0 0 20 20"><path d="M3 3l2 2c1-1 2-1 3-1l2-3c2 1 3 2 3 3l1-3c5 3 6 8 5 11-1 4-4 7-9 7-6 0-9-4-9-9 0-3 1-5 2-7z" fill="url(#fox)"/><circle cx="10" cy="10" r="4" fill="#7b3bd5"/><path d="M4 7c3-2 5 0 6 1l-3 2c1 3 4 3 6 1-1 5-9 5-9-1z" fill="#ff9a1c"/></svg></span>
    <span class="open"><svg width="20" height="20"><rect width="20" height="20" fill="url(#rose)"/><path d="M10 2l6 13-4-2H8l-4 2z" fill="#b3121f"/><path d="M10 2L4 15l4-3 2-4z" fill="#740b14"/></svg></span>
    <span class="alert"><svg width="22" height="20" viewBox="0 0 22 20"><circle cx="9.500" cy="9.500" r="9" fill="#2ba0d9"/><path d="M4 9.500L15 5l-2 10-4-3-1 2-1-4z" fill="#fff"/><rect x="9" y="12" width="12" height="8" rx="1.500" fill="#e0202f"/><text x="15" y="18.700">..23</text></svg></span>
    <span class="focus"><svg width="20" height="20"><rect width="20" height="20" rx="2" fill="#e6393f"/><path d="M15.500 5.500H6v4h8.500v5H4.500" fill="none" stroke="#fff" stroke-width="3" stroke-linejoin="round"/></svg></span>
    <span></span>
    <span><svg width="14" height="14" viewBox="0 0 14 14"><g fill="none" stroke="#eee"><circle cx="9" cy="3" r="2.300"/><circle cx="4.500" cy="6.500" r="2"/><path d="M1 13c0-5 7-5 7 0M8 7c2-2 4-1 5 2"/></g></svg></span>
    <span><svg width="12" height="8"><path d="M1 7l5-5 5 5" fill="none" stroke="#eee" stroke-width="1.200"/></svg></span>
    <span><svg width="13" height="9"><path d="M.5 1.500h10v6H.5z" fill="none" stroke="#eee"/><path d="M2 3h5v3H2zM11 3h2v3h-2z" fill="#eee"/></svg></span>
    <span><svg width="14" height="14" viewBox="0 0 14 14"><g fill="none" stroke="#777"><path d="M2 13C3 8 7 4 13 3M5 13c1-4 4-6 8-7M8 13c1-2 2-3 5-4"/></g><path d="M2 0v5M0 2.500h4" stroke="#eee"/><circle cx="12" cy="12" r="1" fill="#ddd"/></svg></span>
    <span><svg width="15" height="12" viewBox="0 0 15 12"><path d="M1 4.500h2L6 2v8L3 7.500H1zM8 4c1 1 1 3 0 4M10 2.500c2 2 2 5 0 7M12 1c3 3 3 7 0 10" fill="none" stroke="#eee"/></svg></span>
    <span class="lang">ع</span>
    <span class="clock">11:28 PM<br>12/31/2020</span>
    <span><svg width="22" height="22" viewBox="0 0 22 22"><path d="M2 2h14v11h-5l-3 3v-3H2z" fill="#f5f5f5"/><path d="M4 5h10M4 7.500h10M4 10h7" stroke="#222"/><circle cx="15" cy="15" r="6" fill="#2c2c2c" stroke="#888"/><text class="count" x="15" y="18.300">1</text></svg></span>
</footer>
</body>
</html>
```
FILE: styles.css
```
* { box-sizing: border-box; }
body { margin: 0; width: 1280px; height: 720px; overflow: hidden; background: #000; color: #f2f2f2; font: 10.4px "Open Sans", "Noto Sans", sans-serif; letter-spacing: -0.6px; white-space: nowrap; }
svg { display: block; flex: none; overflow: visible; }
.defs { position: absolute; width: 0; height: 0; }
.ic { width: 14px; height: 14px; }
.arrow { width: 5px; height: 3px; }

/* title bar */
.titlebar { display: grid; grid-template-columns: 26px 198px 548px 371px 137px; height: 19px; background: #fff; }
.app-button { width: 26px; height: 26px; background: linear-gradient(#a9a9a9, #6a6a6a); border-right: 1px solid #333; border-bottom: 1px solid #333; z-index: 1; }
.quick { display: grid; grid-template-columns: 24px 17px 21px 20px 20px 20px 9px 22px 7px 23px 11px; align-items: center; justify-items: center; padding-left: 2px; background: #9a9a9a; height: 19px; }
.title { display: flex; gap: 11px; padding-left: 117px; align-items: center; color: #222; height: 19px; font-size: 10.8px; letter-spacing: -0.62px; }
.infocenter { display: grid; grid-template-columns: 12px 149px 20px 20px 66px 16px 16px 24px 4px 30px 14px; height: 19px; align-items: center; justify-items: center; background: #9b9b9b; }
.search { width: 149px; height: 18px; background: #707070; border: 1px solid #484848; padding-left: 2px; line-height: 16px; font-style: italic; color: #ddd; letter-spacing: -0.35px; }
.signin { justify-self: start; padding-left: 2px; letter-spacing: -0.4px; }
.help { justify-self: end; width: 13px; height: 13px; border-radius: 50%; background: #f2f2f2; border: 1px solid #444; color: #1d4a9c; font-weight: bold; line-height: 11px; text-align: center; }
.window-buttons { display: flex; gap: 29px; padding-left: 34px; align-items: center; height: 19px; }

/* menus and tabs */
.menubar { display: grid; grid-template-columns: 32px 35px 38px 42px 48px 41px 41px 65px 48px 65px 54px 39px 663px 30px; align-items: center; padding-left: 37px; height: 18px; background: linear-gradient(#8b8b8b, #575757); letter-spacing: -0.5px; }
.tabs { display: grid; grid-template-columns: 51px 40px 58px 62px 37px 53px 46px 51px 76px 74px 53px 91px; align-items: center; padding-left: 2px; height: 16px; background: #4c4c4c; color: #ccc; }
.tabs .active { width: 42px; height: 15px; margin-top: 1px; text-align: center; line-height: 14px; background: linear-gradient(#7a7a7a, #626262); border: 1px solid #858585; border-bottom: 0; color: #fff; }

/* ribbon */
.ribbon { display: grid; grid-template-columns: 185px 211px 227px 135px 221px 56px 81px 66px 52px; height: 85px; background: #424242; border-bottom: 2px solid #6a6a6a; }
.panel { border-right: 1px solid #454545; border-left: 1px solid #6c6c6c; background: #5a5a5a; }
.panel-body { display: grid; height: 67px; padding-top: 3px; }
.panel-title { display: flex; align-items: center; justify-content: center; gap: 6px; height: 16px; background: #4a4a4a; letter-spacing: -0.4px; }
.panel-title svg { width: 6px; height: 4px; }
.panel-title .launch { width: 5px; height: 5px; }
.wide { padding: 0 4px 0 75px; justify-content: flex-start; }
.wide .launch { margin-left: auto; }
.big { display: flex; flex-direction: column; align-items: center; height: 64px; line-height: 13.5px; text-align: center; }
.big span { margin-top: 3.5px; }
.big .arrow { margin-top: 2px; }
.stack { display: grid; grid-template-rows: 20.5px 20.5px 20.5px; }
.stack > div { display: flex; align-items: center; gap: 5px; }
.draw { grid-template-columns: 32px 39px 43px 33px 1fr; }
.draw .stack { padding-left: 3px; }
.draw .stack > div { gap: 9px; }
.modify { grid-template-columns: 60px 60px 47px 18px 1fr; padding-left: 3px; }
.layers { grid-template-columns: 49px 1fr; }
.icon-row { display: grid; grid-template-columns: repeat(4, 20px) 17px 1fr; align-items: center; height: 20.5px; padding-left: 5px; }
.combo { display: flex; align-items: center; height: 19px; padding: 0 3px 0 8px; border: 1px solid #333; background: linear-gradient(#6e6e6e, #525252); }
.combo .arrow { margin-left: auto; width: 6px; height: 4px; }
.layers .combo { width: 174px; gap: 4px; padding-left: 4px; margin-bottom: 1.5px; margin-left: 1px; }
.swatch { width: 12px; height: 12px; }
.white { background: #fff; }
.green { width: 13px; height: 13px; background: #0f0; border: 1px solid #9c9; margin: 0 7px 0 1px; }
.rule { width: 50px; height: 1px; background: #ddd; margin-left: -1px; }
.block { grid-template-columns: 34px 1fr; letter-spacing: -0.45px; }
.properties { grid-template-columns: 51px 17px 1fr; }
.combos { display: grid; grid-template-rows: 20.5px 20.5px 20.5px; align-items: center; }
.properties .combo { width: 150px; letter-spacing: -0.4px; }
.groups { grid-template-columns: 32px 1fr; }
.pressed { width: 19px; justify-content: center; background: #5b7fc0; border: 1px solid #2f4a80; height: 17px; margin-top: 2px; margin-left: -2px; }
.groups .stack { padding-left: 3px; }
.utilities { grid-template-columns: 58px 1fr; }
.utilities .stack { padding-left: 1px; }
.clipboard { grid-template-columns: 43px 1fr; }
.clipboard .stack { padding-left: 2px; }
.view { grid-template-columns: 50px; }

/* drawing area */
.canvas { position: relative; width: 1278px; height: 525px; background: #212630; border-right: 5px solid #dfe6ee; }
.viewport-label { margin: 0; padding: 4px 2px; font: 8.2px "Liberation Sans", sans-serif; letter-spacing: 0; color: #ccc; }
.model { position: absolute; left: 0; top: 0; width: 1273px; height: 525px; }
.geometry { fill: none; stroke: #d3d6da; stroke-width: 1; }
.geometry .axis { stroke: #8d9095; stroke-width: 2; }
.dims { stroke: #20f020; stroke-width: 1; fill: none; }
.dims .tip { fill: #20f020; stroke: none; }
.dims text { fill: #20f020; stroke: #20f020; stroke-width: .4; font: 31.6px "Liberation Sans", sans-serif; letter-spacing: 0; text-anchor: middle; }
.ucs { fill: none; stroke: #ccc; }
.pointer { fill: #fff; stroke: #222; stroke-width: .5; }
.viewcube { position: absolute; left: 1172px; top: 9px; }
.compass { font: bold 13px "Liberation Sans", sans-serif; fill: #b4b6ba; text-anchor: middle; letter-spacing: 0; }
.face { font: bold 9.5px "Open Sans", sans-serif; font-stretch: 75%; fill: #3c4049; text-anchor: middle; letter-spacing: 0; }
.wcs { position: absolute; left: 1201px; top: 112px; width: 32px; height: 12px; display: flex; align-items: center; gap: 4px; padding-left: 3px; border-radius: 3px; background: #96989c; color: #d5d5d5; font: 8px "Liberation Sans", sans-serif; }
.navbar { position: absolute; left: 1248px; top: 141px; width: 22px; height: 142px; }
.command { position: absolute; left: 260px; top: 503px; display: flex; width: 760px; height: 22px; }
.command-tools { display: flex; align-items: center; gap: 7px; width: 45px; padding-left: 2px; background: linear-gradient(#6f6f6f, #444); }
.command-line { display: flex; align-items: center; flex: 1; padding: 0 4px; background: #b9babd; color: #65676b; font: italic 12.1px "DejaVu Sans Mono", monospace; letter-spacing: 0; }
.command-line span { flex: 1; padding-left: 5px; }

/* layout tabs and status bar */
.bottombar { display: flex; height: 23px; background: #393939; }
.layouts { width: 533px; letter-spacing: -0.5px; }
.layouts text { fill: #bbb; text-anchor: middle; }
.layouts .on { fill: #fff; font-weight: bold; }
.status { position: relative; display: grid; grid-template-columns: 41px 22px 18px 15px 22px 20px 20px 20px 12px 22px 11px 22px 19px 13px 20px 14px 20px 21px 20px 14px 20px 22px 11px 20px 15px 20px 20px 20px 29px 20px 13px 22px 22px 22px 20px 21px 25px 19px; width: 747px; align-items: center; justify-items: center; background: #4d4d4d; border: 1px solid #6a6a6a; border-width: 1px 0; }
.sep { display: flex; align-items: center; justify-content: center; justify-self: stretch; height: 21px; border-right: 1px solid #777; }
.model-btn { border-left: 1px solid #777; color: #fff; }
.scale { gap: 4px; }
.blue { fill: #2f8ff5; }
.grey { fill: #bbb; }
.dim { opacity: .8; }
.pause { position: absolute; left: 714px; top: -9px; opacity: .7; }

/* windows taskbar */
.taskbar { display: grid; grid-template-columns: 40px 40px 40px 46px 35px 48px 35px 47px 36px 44px 42px 577px 40px 20px 20px 20px 20px 30px 57px 35px; height: 34px; background: #02040a; }
.taskbar > span { display: flex; align-items: center; justify-content: center; }
.taskbar .open { border-bottom: 2px solid #76b9ed; }
.taskbar .alert { background: #955020; border-bottom: 2px solid #f57f17; margin-left: 4px; }
.taskbar .focus { background: #2e3036; border-bottom: 2px solid #76b9ed; }
.taskbar text { font: 7px "Liberation Sans", sans-serif; fill: #fff; text-anchor: middle; letter-spacing: -0.3px; }
.taskbar .count { font-size: 10px; }
.taskbar .lang { font: 12px "DejaVu Sans", sans-serif; }
.taskbar .clock { line-height: 15px; text-align: center; color: #fff; letter-spacing: -0.5px; }
```
